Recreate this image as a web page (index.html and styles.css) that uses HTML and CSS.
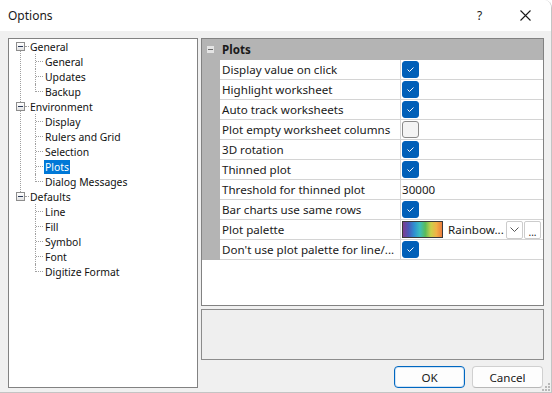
FILE: index.html
```html
<!DOCTYPE html>
<html lang="en">
<head>
    <meta charset="UTF-8">
    <title>Options</title>
    <link rel="stylesheet" href="styles.css">
</head>
<body>

<div class="window">
    <header class="titlebar">
        <span class="title">Options</span>
        <span class="help">?</span>
        <span class="close">
            <svg width="11" height="11" viewBox="0 0 11 11"><path d="M0.5 0.5 L10.5 10.5 M10.5 0.5 L0.5 10.5" stroke="#1a1a1a" stroke-width="1.1" fill="none"/></svg>
        </span>
    </header>

    <div class="content">
        <ul class="tree">
            <li class="top">
                <div class="row"><span class="toggle"></span><span class="tick"></span><span class="label">General</span></div>
                <ul class="children">
                    <li><div class="row"><span class="label">General</span></div></li>
                    <li><div class="row"><span class="label">Updates</span></div></li>
                    <li><div class="row"><span class="label">Backup</span></div></li>
                </ul>
            </li>
            <li class="top">
                <div class="row"><span class="toggle"></span><span class="tick"></span><span class="label">Environment</span></div>
                <ul class="children">
                    <li><div class="row"><span class="label">Display</span></div></li>
                    <li><div class="row"><span class="label">Rulers and Grid</span></div></li>
                    <li><div class="row"><span class="label">Selection</span></div></li>
                    <li><div class="row"><span class="label selected">Plots</span></div></li>
                    <li><div class="row"><span class="label">Dialog Messages</span></div></li>
                </ul>
            </li>
            <li class="top">
                <div class="row"><span class="toggle"></span><span class="tick"></span><span class="label">Defaults</span></div>
                <ul class="children">
                    <li><div class="row"><span class="label">Line</span></div></li>
                    <li><div class="row"><span class="label">Fill</span></div></li>
                    <li><div class="row"><span class="label">Symbol</span></div></li>
                    <li><div class="row"><span class="label">Font</span></div></li>
                    <li><div class="row"><span class="label">Digitize Format</span></div></li>
                </ul>
            </li>
        </ul>

        <div class="main">
            <div class="grid">
                <div class="grid-head">
                    <span class="collapse"></span>
                    <span>Plots</span>
                </div>
                <div class="prop"><span class="margin"></span><span class="name">Display value on click</span><span class="value"><span class="check on"></span></span></div>
                <div class="prop"><span class="margin"></span><span class="name">Highlight worksheet</span><span class="value"><span class="check on"></span></span></div>
                <div class="prop"><span class="margin"></span><span class="name">Auto track worksheets</span><span class="value"><span class="check on"></span></span></div>
                <div class="prop"><span class="margin"></span><span class="name">Plot empty worksheet columns</span><span class="value"><span class="check"></span></span></div>
                <div class="prop"><span class="margin"></span><span class="name">3D rotation</span><span class="value"><span class="check on"></span></span></div>
                <div class="prop"><span class="margin"></span><span class="name">Thinned plot</span><span class="value"><span class="check on"></span></span></div>
                <div class="prop"><span class="margin"></span><span class="name">Threshold for thinned plot</span><span class="value">30000</span></div>
                <div class="prop"><span class="margin"></span><span class="name">Bar charts use same rows</span><span class="value"><span class="check on"></span></span></div>
                <div class="prop"><span class="margin"></span><span class="name">Plot palette</span>
                    <span class="value palette">
                        <span class="swatch"></span>
                        <span class="palette-name">Rainbow...</span>
                        <span class="mini-btn">
                            <svg width="9" height="5" viewBox="0 0 9 5"><path d="M0.5 0.5 L4.5 4.5 L8.5 0.5" stroke="#555" fill="none"/></svg>
                        </span>
                        <span class="mini-btn dots">...</span>
                    </span>
                </div>
                <div class="prop"><span class="margin"></span><span class="name">Don't use plot palette for line/...</span><span class="value"><span class="check on"></span></span></div>
            </div>

            <div class="desc"></div>

            <div class="buttons">
                <button class="btn default">OK</button>
                <button class="btn">Cancel</button>
            </div>
        </div>
    </div>

    <svg class="grip" width="8" height="8" viewBox="0 0 8 8">
        <rect x="6" y="0" width="2" height="2" fill="#b8b8b8"/>
        <rect x="3" y="3" width="2" height="2" fill="#b8b8b8"/>
        <rect x="6" y="3" width="2" height="2" fill="#b8b8b8"/>
        <rect x="0" y="6" width="2" height="2" fill="#b8b8b8"/>
        <rect x="3" y="6" width="2" height="2" fill="#b8b8b8"/>
        <rect x="6" y="6" width="2" height="2" fill="#b8b8b8"/>
    </svg>
</div>

</body>
</html>
```

FILE: styles.css
```css
body {
    font-family: "Noto Sans", "Open Sans", sans-serif;
    font-size: 11.6px;
    color: #1a1a1a;
    margin: 0;
    padding: 0;
    background-color: #ffffff;
}

.window {
    position: relative;
    width: 552px;
    height: 393px;
    box-sizing: border-box;
    border-right: 1px solid #c4c4c4;
    border-bottom: 1px solid #c4c4c4;
    border-top-right-radius: 8px;
    overflow: hidden;
    display: flex;
    flex-direction: column;
}

.titlebar {
    height: 31px;
    flex: none;
    display: flex;
    align-items: center;
    background-color: #ffffff;
    padding-left: 8px;
}

.title {
    font-size: 12px;
    flex: 1;
}

.help {
    font-size: 12px;
    width: 8px;
    margin-right: 35px;
}

.close {
    display: flex;
    margin-right: 20px;
}

.content {
    flex: 1;
    display: flex;
    gap: 3px;
    background-color: #f0f0f0;
    padding: 7px 7px 0 8px;
}

/* tree */

.tree {
    width: 190px;
    height: 350px;
    box-sizing: border-box;
    border: 1px solid #828282;
    background-color: #ffffff;
    margin: 0;
    padding: 0;
    list-style: none;
    font-size: 10.4px;
    color: #111111;
}

.tree ul {
    list-style: none;
    margin: 0;
    padding: 0;
}

.tree li {
    position: relative;
}

.row {
    height: 15px;
    display: flex;
    align-items: center;
}

.top > .row {
    padding-left: 7px;
}

.top::before {
    content: "";
    position: absolute;
    left: 11px;
    top: 12px;
    bottom: -3px;
    border-left: 1px dotted #a0a0a0;
}

.top:last-child::before {
    display: none;
}

.toggle {
    position: relative;
    width: 9px;
    height: 9px;
    box-sizing: border-box;
    border: 1px solid #8d8d8d;
    background: linear-gradient(#ffffff, #e2e2e2);
}

.toggle::after {
    content: "";
    position: absolute;
    left: 1px;
    top: 3px;
    width: 5px;
    height: 1px;
    background-color: #2b3a5a;
}

.tick {
    width: 4px;
    border-top: 1px dotted #a0a0a0;
}

.label {
    padding: 0 1px;
    line-height: 14px;
    white-space: nowrap;
}

.label.selected {
    background-color: #0078d7;
    color: #ffffff;
}

.children .row {
    padding-left: 35px;
}

.children li::before {
    content: "";
    position: absolute;
    left: 26px;
    top: 0;
    bottom: 0;
    border-left: 1px dotted #a0a0a0;
}

.children li:last-child::before {
    bottom: 7px;
}

.children li::after {
    content: "";
    position: absolute;
    left: 27px;
    top: 7px;
    width: 7px;
    border-top: 1px dotted #a0a0a0;
}

/* right side */

.main {
    width: 343px;
    display: flex;
    flex-direction: column;
}

.grid {
    height: 268px;
    box-sizing: border-box;
    border: 1px solid #828282;
    background-color: #ffffff;
}

.grid-head {
    height: 21px;
    display: flex;
    align-items: center;
    background-color: #b4b4b4;
    font-weight: bold;
}

.collapse {
    position: relative;
    width: 7px;
    height: 7px;
    margin: 0 8px 0 5px;
    background-color: #e4e4e4;
}

.collapse::after {
    content: "";
    position: absolute;
    left: 1px;
    top: 3px;
    width: 5px;
    height: 1px;
    background-color: #6a6a6a;
}

.prop {
    display: grid;
    grid-template-columns: 18px 181px 1fr;
    height: 20px;
}

.margin {
    background-color: #b4b4b4;
}

.name,
.value {
    display: flex;
    align-items: center;
    box-sizing: border-box;
    border-bottom: 1px solid #d4d4d4;
    white-space: nowrap;
    overflow: hidden;
}

.name {
    border-right: 1px solid #d4d4d4;
    padding-left: 2px;
}

.value {
    padding-left: 1px;
}

.check {
    width: 17px;
    height: 17px;
    box-sizing: border-box;
    border: 1px solid #8a8a8a;
    border-radius: 3px;
    background-color: #f4f4f4;
}

.check.on {
    border-color: #005fb8;
    background-color: #005fb8;
    background-image: url("data:image/svg+xml,%3Csvg xmlns='http://www.w3.org/2000/svg' width='15' height='15'%3E%3Cpath d='M4.5 7.5 L6.5 9.5 L10.5 5.5' stroke='white' stroke-width='1' fill='none'/%3E%3C/svg%3E");
}

.palette {
    gap: 5px;
}

.swatch {
    width: 41px;
    height: 17px;
    flex: none;
    box-sizing: border-box;
    border: 1px solid #3a3a3a;
    background: linear-gradient(to right, #7d3c8f, #4a58b8, #2f8fd2, #3bbdc0, #58bb5a, #c9d14a, #f1b146, #ec7d3c);
}

.palette-name {
    width: 56px;
    flex: none;
}

.mini-btn {
    width: 17px;
    height: 18px;
    flex: none;
    box-sizing: border-box;
    border: 1px solid #cccccc;
    border-radius: 2px;
    background-color: #ffffff;
    display: flex;
    align-items: center;
    justify-content: center;
    margin-left: -3px;
}

.mini-btn.dots {
    align-items: flex-end;
    font-size: 10px;
    line-height: 12px;
    margin-left: -4px;
}

.desc {
    height: 51px;
    box-sizing: border-box;
    margin-top: 3px;
    border: 1px solid #8c8c8c;
    background-color: #efefef;
}

.buttons {
    display: flex;
    justify-content: flex-end;
    gap: 7px;
    margin-top: 6px;
    padding-right: 1px;
}

.btn {
    width: 71px;
    height: 22px;
    font-family: inherit;
    font-size: 11.6px;
    color: #1a1a1a;
    background-color: #fdfdfd;
    border: 1px solid #d0d0d0;
    border-bottom-color: #b8b8b8;
    border-radius: 4px;
    padding: 0;
}

.btn.default {
    border: 1px solid #0067c0;
    box-shadow: inset 0 0 0 1px #cfe3f6;
}

.grip {
    position: absolute;
    right: 1px;
    bottom: 1px;
}
```
